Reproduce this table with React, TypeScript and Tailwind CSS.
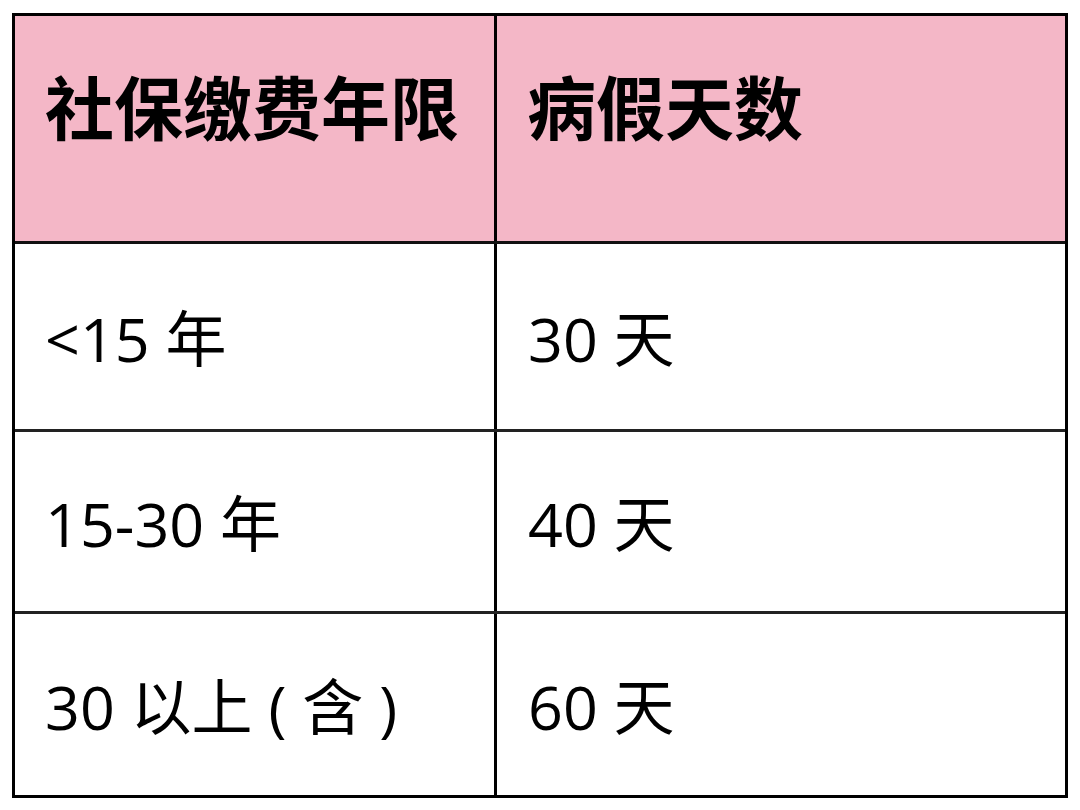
import React from 'react';

const font = { fontFamily: '"Noto Sans CJK SC", "Noto Sans", sans-serif' };
const bodyFont = { fontFamily: '"Open Sans", "Noto Sans CJK SC", sans-serif' };

const rows = [
  { years: '<15 年', days: '30 天', h: 'h-[188px]' },
  { years: '15-30 年', days: '40 天', h: 'h-[182px]' },
  { years: '30 以上 ( 含 )', days: '60 天', h: 'h-[181px]' },
];

export default function App() {
  return (
    <div className="w-[1080px] h-[810px] bg-white pt-[13px] pl-[12px]" style={font}>
      <div className="w-[1056px] border-[3px] border-black text-black">
        {/* header */}
        <div className="flex h-[228px] bg-[#f4b7c7] border-b-[3px] border-[#111]">
          <div className="w-[482px] border-r-[3px] border-black pl-[30px] pt-[54px] text-[69px] font-bold leading-[70px]">
            社保缴费年限
          </div>
          <div className="flex-1 pl-[30px] pt-[54px] text-[69px] font-bold leading-[70px]">
            病假天数
          </div>
        </div>
        {rows.map((r, i) => (
          <div
            key={i}
            className={`flex ${r.h} ${i < rows.length - 1 ? 'border-b-[3px] border-[#222]' : ''}`}
            style={bodyFont}
          >
            <div className="w-[482px] border-r-[3px] border-black pl-[30px] flex items-center pt-[4px] text-[61px] leading-none">
              {r.years}
            </div>
            <div className="flex-1 pl-[31px] flex items-center pt-[4px] text-[61px] leading-none">
              {r.days}
            </div>
          </div>
        ))}
      </div>
    </div>
  );
}
